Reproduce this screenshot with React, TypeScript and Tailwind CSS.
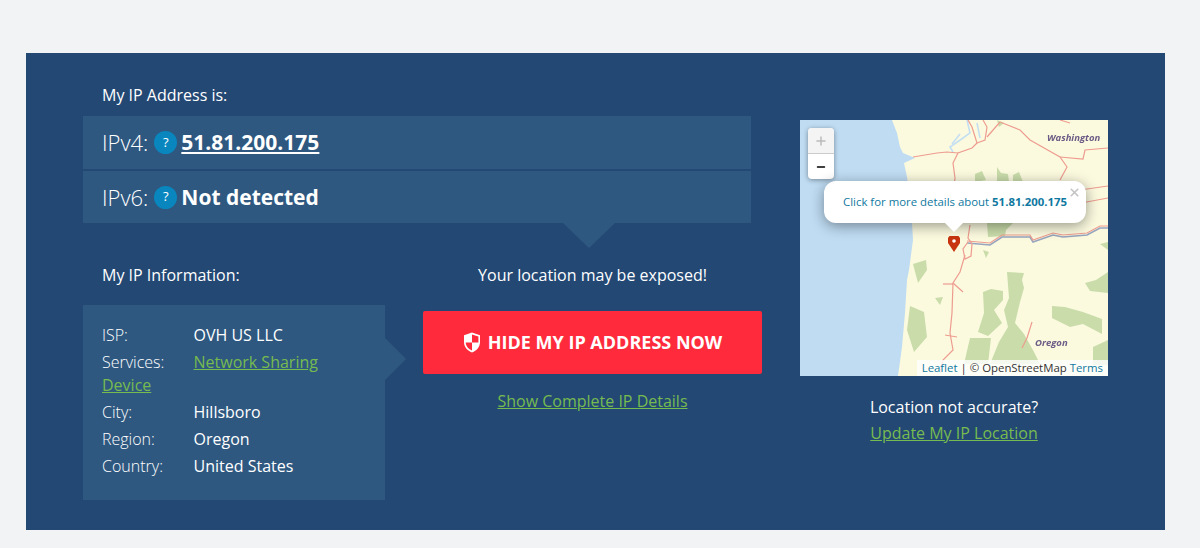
import { Plus, Minus, X } from "lucide-react";

const infoRows = [
  { label: "ISP:", value: "OVH US LLC" },
  { label: "Services:", value: "Network Sharing", link: true, wrapped: "Device" },
  { label: "City:", value: "Hillsboro" },
  { label: "Region:", value: "Oregon" },
  { label: "Country:", value: "United States" },
];

function HelpBadge() {
  return (
    <span className="ml-[6px] mr-[4px] flex h-[23px] w-[23px] shrink-0 items-center justify-center rounded-full bg-[#0a86bf] text-[13px] font-normal text-white">
      ?
    </span>
  );
}

function MapDrawing() {
  return (
    <svg viewBox="0 0 308 256" className="block h-[256px] w-[308px] blur-[0.4px]">
      <rect width="308" height="256" fill="#fbfadf" />
      {/* water */}
      <path
        d="M0 0H92L95 8L97 13L100 27L103 33L115 38L104 43L107 57L111 85L113 120L109 150L107 160L105 193L102 227L98 256H0Z"
        fill="#bfdcf3"
      />
      <g fill="none" stroke="#c5dff2" strokeWidth="1.6">
        <path d="M167 0L170 13L163 18L150 27L153 32" />
        <path d="M177 3L180 18" />
        <path d="M160 14L152 24" />
      </g>
      {/* forest */}
      <g fill="#c9dcaa">
        <path d="M197 0L204 3L199 7Z" />
        <path d="M175 54L182 51L186 60L175 62Z" />
        <path d="M197 47L201 53L208 54L209 62H197Z" />
        <path d="M213 55L219 52L223 62H213Z" />
        <path d="M187 103L213 103L206 110L205 116L188 117Z" />
        <path d="M207 152L224 153L222 160L224 168L220 182L215 203L224 214L234 232L240 244H190L199 222L208 207L204 190L209 178Z" />
        <path d="M183 172L191 169L203 171L203 180L194 190L202 203L188 216L178 212L184 193Z" />
        <path d="M170 218L191 218L188 244H164Z" />
        <path d="M252 186L265 187L283 192L302 199L302 214L283 204L270 207L252 198Z" />
        <path d="M285 163L296 160L308 152V173L290 171Z" />
        <path d="M293 227L308 220V245L293 245Z" />
        <path d="M113 144L126 140L127 150L118 163Z" />
        <path d="M135 178L143 177L140 185Z" />
        <path d="M110 186L124 192L127 217L114 232L107 210Z" />
        <path d="M183 130L189 132L186 138Z" />
        <path d="M300 124L308 122V130Z" />
      </g>
      {/* river */}
      <path
        d="M167 123L190 125L202 117L230 117L233 122L253 115L263 117L287 115L300 108L308 108"
        fill="none"
        stroke="#97a5be"
        strokeWidth="1.6"
      />
      {/* roads */}
      <g fill="none" stroke="#ee9c8f" strokeWidth="1.2">
        <path d="M168 0L172 7L177 23L172 28L158 33L153 43L155 58L154 66" />
        <path d="M158 33L147 32L137 33L113 37" />
        <path d="M183 0L187 7L185 20L177 23" />
        <path d="M200 2L187 17" />
        <path d="M200 2L220 10L230 20L260 37L267 47L260 60" />
        <path d="M260 37L283 39L285 30L308 28" />
        <path d="M260 0L270 3" />
        <path d="M263 66L280 70L308 66" />
        <path d="M276 84L308 78" />
        <path d="M170 105L168 118L172 124L171 136L165 139L163 129L168 122" />
        <path d="M167 121L190 123L202 115L230 115L233 120L253 113L263 115L287 113L300 106L308 106" />
        <path d="M165 135L160 152L153 163L152 193L150 213L153 230L143 240L140 253" />
        <path d="M153 163L163 172" />
        <path d="M143 164L153 164" />
        <path d="M145 215L157 217" />
        <path d="M232 202L227 218L222 228" />
      </g>
      {/* state labels */}
      <text
        x="247"
        y="21"
        fill="#6b5b85"
        fontSize="9.5"
        fontWeight="700"
        fontStyle="italic"
        fontFamily="'Open Sans', sans-serif"
      >
        Washington
      </text>
      <text
        x="235"
        y="226"
        fill="#6b5b85"
        fontSize="9.5"
        fontWeight="700"
        fontStyle="italic"
        fontFamily="'Open Sans', sans-serif"
      >
        Oregon
      </text>
    </svg>
  );
}

function Marker() {
  return (
    <svg viewBox="0 0 12 16" className="absolute left-[148px] top-[116px] h-[16px] w-[12px]">
      <path d="M1.500 0H10.500L12 2V7L6 16 0 7V2Z" fill="#c7340f" />
      <circle cx="6" cy="5" r="1.800" fill="#fff" />
    </svg>
  );
}

export default function App() {
  return (
    <div className="min-h-[548px] bg-[#f2f3f5] pl-[26px] pr-[35px] pt-[53px] font-['Open_Sans',sans-serif] text-white">
      <div className="flex h-[477px] bg-[#234874] pl-[57px]">
        <div className="w-[668px] shrink-0">
          <div className="pl-[19px] pt-[32px] text-[16px] leading-[20px]">My IP Address is:</div>
          <div className="mt-[11px] flex h-[53px] items-center bg-[#2e587f] pl-[19px] text-[22px] font-light">
            IPv4:
            <HelpBadge />
            <a className="pt-[1px] text-[21px] font-bold underline">51.81.200.175</a>
          </div>
          <div className="mt-[2px] flex h-[52px] items-center bg-[#2e587f] pl-[19px] text-[22px] font-light">
            IPv6:
            <HelpBadge />
            <span className="pt-[1px] text-[21px] font-bold">Not detected</span>
          </div>
          <div className="ml-[480px] h-0 w-0 border-x-[26px] border-t-[25px] border-x-transparent border-t-[#2e587f]" />

          <div className="mt-[17px] flex">
            <div className="relative w-[302px] shrink-0">
              <div className="pl-[19px] text-[16px] leading-[20px]">My IP Information:</div>
              <div className="relative mt-[20px] h-[195px] bg-[#2e587f] px-[19px] pt-[19px] text-[16px] leading-[23px]">
                {infoRows.map((row) => (
                  <div key={row.label} className="mb-[4px]">
                    <span className="inline-block w-[91.500px] font-light">{row.label}</span>
                    {row.link ? (
                      <a className="text-[#76bb50] underline">{row.value}</a>
                    ) : (
                      <span>{row.value}</span>
                    )}
                    {row.wrapped && (
                      <a className="block text-[#76bb50] underline">{row.wrapped}</a>
                    )}
                  </div>
                ))}
                <div className="absolute left-full top-[33px] h-0 w-0 border-y-[21px] border-l-[21px] border-y-transparent border-l-[#2e587f]" />
              </div>
            </div>
            <div className="ml-[38px] w-[339px] shrink-0">
              <div className="text-center text-[16px] leading-[20px]">Your location may be exposed!</div>
              <button className="mt-[26px] flex h-[63px] w-full items-center justify-center gap-[7px] rounded-[2px] bg-[#ff2b3c] text-[18px] font-bold">
                <svg viewBox="0 0 18 21" className="h-[21px] w-[18px]">
                  <path d="M9 .5L17 3.200V10c0 5-3.400 8.600-8 10.500C4.400 18.600 1 15 1 10V3.200Z" fill="#fff" />
                  <path d="M9 2.500V10.500H2.600C3 14.500 5.500 17 9 18.400V10.500H15.400V4.600Z" fill="#ff2b3c" />
                </svg>
                HIDE MY IP ADDRESS NOW
              </button>
              <div className="mt-[15px] text-center text-[16px] leading-[24px]">
                <a className="text-[#76bb50] underline">Show Complete IP Details</a>
              </div>
            </div>
          </div>
        </div>

        <div className="ml-[49px] w-[308px] shrink-0 pt-[67px]">
          <div className="relative h-[256px] w-[308px] overflow-hidden">
            <MapDrawing />
            <Marker />
            <div className="absolute left-[8px] top-[8px] w-[26px] overflow-hidden rounded-[4px] bg-white shadow-[0_1px_5px_rgba(0,0,0,0.4)]">
              <div className="flex h-[26px] items-center justify-center border-b border-[#ccc] bg-[#f4f4f4] text-[#bbb]">
                <Plus size={14} strokeWidth={2.5} />
              </div>
              <div className="flex h-[25px] items-center justify-center text-black">
                <Minus size={12} strokeWidth={3} />
              </div>
            </div>
            <div className="absolute left-[24px] top-[61px] flex h-[42px] w-[262px] items-center justify-center rounded-[12px] bg-white text-[11.400px] text-[#0f78a0] shadow-[0_3px_14px_rgba(0,0,0,0.4)]">
              <span>
                Click for more details about <b className="font-bold">51.81.200.175</b>
              </span>
              <X size={13} strokeWidth={3} className="absolute right-[5px] top-[5px] text-[#c3c3c3]" />
            </div>
            <div className="absolute left-[145px] top-[103px] h-0 w-0 border-x-[9px] border-t-[9px] border-x-transparent border-t-white" />
            <div className="absolute bottom-0 right-0 bg-white/80 px-[5px] text-[11.400px] leading-[16px] text-[#333]">
              <a className="text-[#0f78a0]">Leaflet</a> | © OpenStreetMap <a className="text-[#0f78a0]">Terms</a>
            </div>
          </div>
          <div className="mt-[20px] text-center text-[16px] leading-[22px]">Location not accurate?</div>
          <div className="mt-[3px] text-center text-[16px] leading-[24px]">
            <a className="text-[#76bb50] underline">Update My IP Location</a>
          </div>
        </div>
      </div>
    </div>
  );
}
